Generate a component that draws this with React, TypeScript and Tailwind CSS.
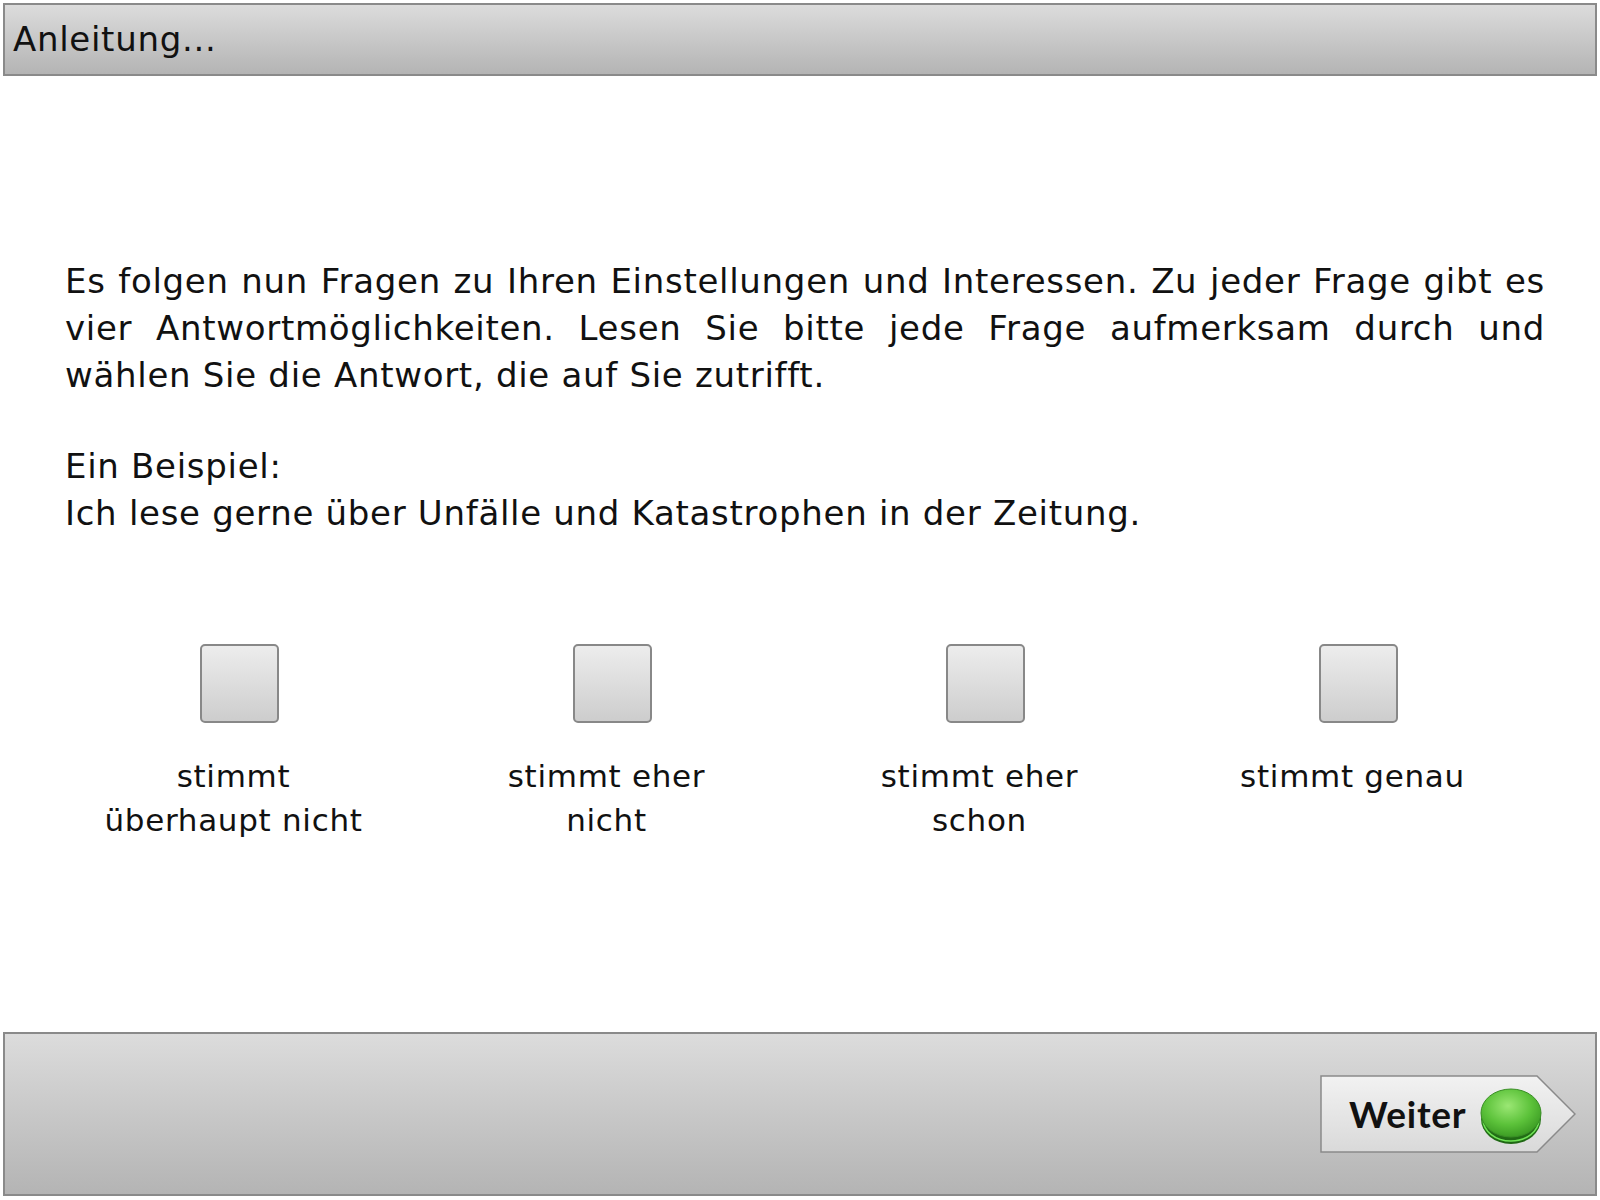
import React from "react";

const answers = [
  ["stimmt", "überhaupt nicht"],
  ["stimmt eher", "nicht"],
  ["stimmt eher", "schon"],
  ["stimmt genau"],
];

const GreenDot = () => (
  <svg width="62" height="58" viewBox="0 0 62 58">
    <defs>
      <radialGradient id="dotTop" cx="45%" cy="35%" r="65%">
        <stop offset="0%" stopColor="#9be774" />
        <stop offset="60%" stopColor="#5cc23a" />
        <stop offset="100%" stopColor="#3c9c24" />
      </radialGradient>
      <linearGradient id="dotSide" x1="0" y1="0" x2="0" y2="1">
        <stop offset="0%" stopColor="#2f8a1e" />
        <stop offset="100%" stopColor="#1f6614" />
      </linearGradient>
    </defs>
    <ellipse cx="31" cy="32" rx="30" ry="25" fill="url(#dotSide)" />
    <path d="M3 32 A28 22 0 0 0 59 32" fill="none" stroke="#6fe356" strokeWidth="1.5" />
    <ellipse cx="31" cy="26" rx="30" ry="24" fill="url(#dotTop)" />
    <ellipse cx="31" cy="26" rx="30" ry="24" fill="none" stroke="#3a8f26" strokeWidth="1" />
  </svg>
);

const NextButton = () => (
  <button className="relative flex h-[78px] w-[256px] items-center pl-[29px]">
    <svg className="absolute inset-0" width="256" height="78" viewBox="0 0 256 78">
      <defs>
        <linearGradient id="btnFill" x1="0" y1="0" x2="0" y2="1">
          <stop offset="0%" stopColor="#f2f2f2" />
          <stop offset="100%" stopColor="#d9d9d9" />
        </linearGradient>
      </defs>
      <polygon points="1,1 217,1 255,39 217,77 1,77" fill="url(#btnFill)" stroke="#8a8a8a" strokeWidth="1.5" />
    </svg>
    <span className="relative font-['Lato',sans-serif] text-[37px] font-bold text-[#111]">Weiter</span>
    <span className="relative ml-[14px] mt-[3px]">
      <GreenDot />
    </span>
  </button>
);

export default function App() {
  return (
    <div className="flex h-[1200px] w-[1600px] flex-col bg-white font-['DejaVu_Sans',sans-serif] text-[#111] tracking-[0.7px]">
      <header className="mx-[3px] mt-[3px] flex h-[73px] items-center border-2 border-[#8a8a8a] bg-gradient-to-b from-[#dcdcdc] to-[#b4b4b4] pl-[8px] text-[34px]">
        Anleitung...
      </header>

      <main className="flex-1 pl-[65px] pr-[55px] pt-[182px]">
        <div className="text-[34px] leading-[47px]">
          <div className="text-justify [text-align-last:justify]">
            Es folgen nun Fragen zu Ihren Einstellungen und Interessen. Zu jeder Frage gibt es
          </div>
          <div className="text-justify [text-align-last:justify]">
            vier Antwortmöglichkeiten. Lesen Sie bitte jede Frage aufmerksam durch und
          </div>
          <div>wählen Sie die Antwort, die auf Sie zutrifft.</div>
          <div className="mt-[44px]">Ein Beispiel:</div>
          <div>Ich lese gerne über Unfälle und Katastrophen in der Zeitung.</div>
        </div>

        <div className="-ml-[12px] mt-[107px] grid w-[1492px] grid-cols-4">
          {answers.map((lines, i) => (
            <div key={i} className="flex flex-col items-center">
              <div className="h-[79px] w-[79px] rounded-[5px] border-2 border-[#888] bg-gradient-to-b from-[#ededed] to-[#cdcdcd]" />
              <div className="mt-[31px] pr-[12px] text-center text-[31px] leading-[44px]">
                {lines.map((l) => (
                  <div key={l}>{l}</div>
                ))}
              </div>
            </div>
          ))}
        </div>
      </main>

      <footer className="mx-[3px] mb-[4px] flex h-[164px] items-center justify-end border-2 border-[#8a8a8a] bg-gradient-to-b from-[#dcdcdc] to-[#b4b4b4] pr-[19px]">
        <NextButton />
      </footer>
    </div>
  );
}
